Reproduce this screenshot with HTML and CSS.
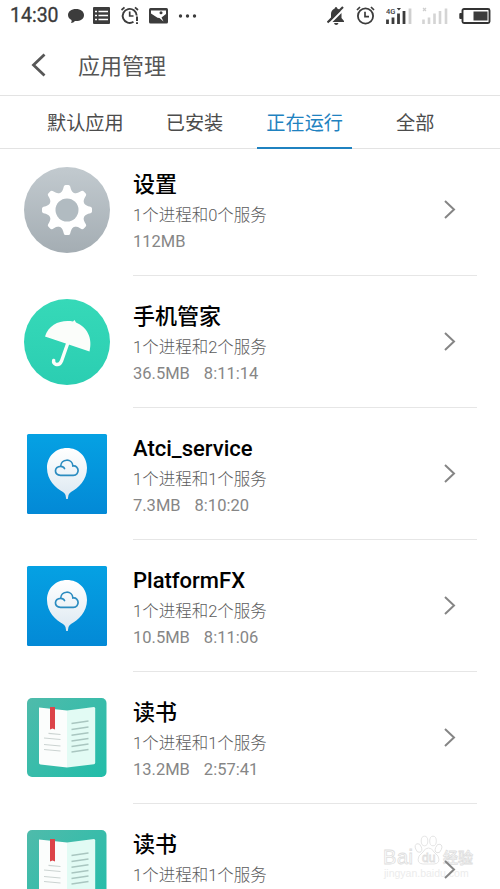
FILE: index.html
```html
<!DOCTYPE html>
<html lang="zh-CN">
<head>
    <meta charset="UTF-8">
    <meta name="viewport" content="width=device-width, initial-scale=1.0">
    <title>应用管理</title>
    <link rel="stylesheet" href="styles.css">
</head>
<body>

    <!-- shared shapes -->
    <svg class="defs" width="0" height="0">
        <defs>
            <linearGradient id="grey" x1="0" y1="0" x2="0" y2="1">
                <stop offset="0" stop-color="#c2cacf"/>
                <stop offset="1" stop-color="#a4adb3"/>
            </linearGradient>
            <linearGradient id="green" x1="0" y1="0" x2="0" y2="1">
                <stop offset="0" stop-color="#36d9b8"/>
                <stop offset="1" stop-color="#2bceb2"/>
            </linearGradient>
            <linearGradient id="blue" x1="0" y1="0" x2="0" y2="1">
                <stop offset="0" stop-color="#05a1e3"/>
                <stop offset="1" stop-color="#0389d6"/>
            </linearGradient>
            <linearGradient id="balloon" x1="0" y1="0" x2="0" y2="1">
                <stop offset="0" stop-color="#ffffff"/>
                <stop offset="1" stop-color="#dce8f1"/>
            </linearGradient>
            <linearGradient id="teal" x1="0" y1="0" x2="1" y2="1">
                <stop offset="0" stop-color="#4fbbab"/>
                <stop offset="1" stop-color="#22bda9"/>
            </linearGradient>
        </defs>
        <symbol id="chevron" viewBox="0 0 14 22">
            <path d="M2 2 L11 10.500 L2 19" fill="none" stroke="#858585" stroke-width="2"/>
        </symbol>
        <symbol id="cloud" viewBox="0 0 86 86">
            <rect x="3" y="3" width="80" height="80" rx="1.500" fill="url(#blue)"/>
            <path d="M43 17 C54.500 17 63 25.500 63 37 C63 49 54.500 57 47 61 Q45 62.500 44.500 64 L43.800 68 H42.200 L41.500 64 Q41 62.500 39 61 C31.500 57 23 49 23 37 C23 25.500 31.500 17 43 17Z" fill="url(#balloon)"/>
            <path d="M36.500 44.300 C29.500 44.300 30 35.300 36.700 35.300 C36.700 27.500 48.500 27 48.900 35 C55.500 34 56 44.300 49.300 44.300Z M36.700 35.300 Q39.500 35.300 40.500 37.500" fill="none" stroke="#2b8cc0" stroke-width="1.700" stroke-linecap="round"/>
        </symbol>
        <symbol id="book" viewBox="0 0 86 86">
            <rect x="3" y="3" width="79.500" height="79" rx="5" fill="url(#teal)"/>
            <path d="M15 12.500 L43 15.500 V72.500 L16.500 69.500 Q15 69.300 15 68Z" fill="#fbfdfc"/>
            <path d="M43 15.500 L70 12 Q71.200 12 71.200 13.500 V67.500 Q71.200 69 70 69.200 L43 72.500Z" fill="#e2fbf4"/>
            <path d="M26 12 H31 V34.500 L28.500 33.500 L26 34.500Z" fill="#dc4348"/>
            <path d="M24.500 38.300 L36.500 39.500 M20 43 L36.500 44.500 M20 49.500 L36.500 51 M20 54.500 L36.500 56" stroke="#cbd3d1" stroke-width="1.200"/>
            <path d="M47.500 28.500 L64.500 26 M47.500 34.500 L64.500 32 M47.500 40.200 L64.500 37.700 M47.500 46 L64.500 43.500 M47.500 51.500 L64.500 49 M47.500 57 L64.500 54.500" stroke="#a9c6c0" stroke-width="1.400"/>
        </symbol>
    </svg>

    <div class="status-bar">
        <span class="time">14:30</span>
        <svg class="ic-chat" width="18" height="18" viewBox="0 0 18 18">
            <path d="M9 2 C13.700 2 17 4.600 17 8 C17 12 13.500 14 9 14 L8 14 Q6.500 16 4 16 Q5 14.500 4.500 13 C2.300 12 1 10.200 1 8 C1 4.600 4.300 2 9 2Z" fill="#3c3c3c"/>
        </svg>
        <svg class="ic-list" width="17" height="17" viewBox="0 0 17 17">
            <rect width="17" height="17" rx="1" fill="#3c3c3c"/>
            <path d="M2 4.500 H4 M5.500 4.500 H15 M2 8.500 H4 M5.500 8.500 H15 M2 12.500 H4 M5.500 12.500 H15" stroke="#fff" stroke-width="1.300"/>
        </svg>
        <svg class="ic-alarm" width="20" height="19" viewBox="0 0 20 19">
            <path d="M13.500 15.800 A7 7 0 1 1 16.700 9.500" fill="none" stroke="#3c3c3c" stroke-width="1.900"/>
            <path d="M9.700 5.500 V10 H13.500 M1.500 4 L4.500 1.300 M15 1.300 L18 4" fill="none" stroke="#3c3c3c" stroke-width="1.700"/>
            <path d="M17 10.500 V15 M17 16.300 V18" stroke="#3c3c3c" stroke-width="2"/>
        </svg>
        <svg class="ic-photo" width="19" height="16" viewBox="0 0 19 16">
            <rect width="19" height="15.500" rx="1.500" fill="#3c3c3c"/>
            <path d="M2 2.500 H17 V6 L12.500 9.500 L14.500 13.500 L10.500 10 L8.500 9.800 L2 5.500Z" fill="#fff"/>
            <circle cx="12" cy="4.800" r="1.500" fill="#3c3c3c"/>
        </svg>
        <svg class="ic-more" width="19" height="6" viewBox="0 0 19 6">
            <g fill="#3c3c3c"><circle cx="2.500" cy="3" r="1.700"/><circle cx="9.500" cy="3" r="1.700"/><circle cx="16.500" cy="3" r="1.700"/></g>
        </svg>

        <svg class="ic-mute" width="18" height="19" viewBox="0 0 18 19">
            <path d="M9 1 Q10.300 1 10.300 2.500 Q14.500 4 14.500 8 V12 L17 15 V16 H1.500 V15 L4 12 V8 Q4 4 7.700 2.500 Q7.700 1 9 1Z M7 17 H11.500 Q11 19 9.200 19 Q7.500 19 7 17Z" fill="#3c3c3c"/>
            <path d="M2 18 L18 2" stroke="#fff" stroke-width="2"/>
            <path d="M0.500 16.500 L16 1" stroke="#3c3c3c" stroke-width="2.200"/>
        </svg>
        <svg class="ic-clock" width="19" height="19" viewBox="0 0 19 19">
            <circle cx="9.500" cy="10" r="7.600" fill="none" stroke="#3c3c3c" stroke-width="1.800"/>
            <path d="M9 5.800 V10.700 H13 M1 4 L4 1 M15 1 L18 4" fill="none" stroke="#3c3c3c" stroke-width="1.700"/>
        </svg>
        <svg class="ic-signal" width="26" height="18" viewBox="0 0 26 18">
            <text class="net" x="0" y="6.500">4G</text>
            <path d="M10.700 1 H15 L12.900 3.500Z" fill="#3c3c3c"/>
            <path d="M1.500 12.500 V17 M7 10.500 V17 M12.500 6.500 V17 M18 4 V17" stroke="#3c3c3c" stroke-width="2.800"/>
            <path d="M24 1.500 V17" stroke="#cfcfcf" stroke-width="2.800"/>
        </svg>
        <svg class="ic-signal2" width="26" height="18" viewBox="0 0 26 18">
            <path d="M1.500 12.500 V17 M7 10.500 V17 M12.500 6.500 V17 M18 4 V17 M24 1.500 V17" stroke="#d4d4d4" stroke-width="2.600"/>
            <path d="M1 1 L4 4 M4 1 L1 4" stroke="#cfcfcf" stroke-width="1.200"/>
        </svg>
        <svg class="ic-battery" width="32" height="16" viewBox="0 0 32 16">
            <rect x="3.500" y="1" width="27" height="14" rx="1.500" fill="#fff" stroke="#333" stroke-width="1.900"/>
            <rect x="0.300" y="5" width="3" height="6" rx="1" fill="#333"/>
            <rect x="14.500" y="3.500" width="14" height="9" fill="#3c3c3c"/>
        </svg>
    </div>

    <header class="title-bar">
        <svg class="back" width="16" height="24" viewBox="0 0 16 24">
            <path d="M13.500 1.500 L2.500 12 L13.500 22.500" fill="none" stroke="#575757" stroke-width="2.800"/>
        </svg>
        <h1>应用管理</h1>
    </header>

    <nav class="tabs">
        <a class="tab">默认应用</a>
        <a class="tab">已安装</a>
        <a class="tab active">正在运行</a>
        <a class="tab">全部</a>
    </nav>

    <ul class="app-list">
        <li class="app">
            <svg class="app-icon" viewBox="0 0 86 86">
                <circle cx="43" cy="43" r="43" fill="url(#grey)"/>
                <g fill="#fff">
                    <circle cx="43" cy="43" r="18.500"/>
                    <g id="teeth">
                        <path id="tooth" d="M36 26.500 Q38.800 24.500 39.800 19.500 Q40.200 18 41.500 18 H44.500 Q45.800 18 46.200 19.500 Q47.200 24.500 50 26.500Z"/>
                        <use href="#tooth" transform="rotate(45 43 43)"/>
                        <use href="#tooth" transform="rotate(90 43 43)"/>
                        <use href="#tooth" transform="rotate(135 43 43)"/>
                    </g>
                    <use href="#teeth" transform="rotate(180 43 43)"/>
                </g>
                <circle cx="43" cy="43" r="11.500" fill="#b1bbc1"/>
            </svg>
            <div class="info">
                <h2>设置</h2>
                <p>1个进程和0个服务</p>
                <p class="usage"><span>112MB</span></p>
            </div>
            <svg class="arrow"><use href="#chevron"/></svg>
        </li>
        <li class="app">
            <svg class="app-icon" viewBox="0 0 86 86">
                <circle cx="43" cy="43" r="43" fill="url(#green)"/>
                <path d="M21 37.500 C25 25 37 20.500 49 22.500 L50.500 21 L52 23.500 C63 28 69 39 65.500 52.500Z" fill="#fbfdfa"/>
                <path d="M43.500 45 L37.500 62 Q35.500 66.500 31.800 65.300 Q29 64.200 29.700 61.500" fill="none" stroke="#fbfdfa" stroke-width="3.400" stroke-linecap="round"/>
            </svg>
            <div class="info">
                <h2>手机管家</h2>
                <p>1个进程和2个服务</p>
                <p class="usage"><span>36.5MB</span><span>8:11:14</span></p>
            </div>
            <svg class="arrow"><use href="#chevron"/></svg>
        </li>
        <li class="app">
            <svg class="app-icon"><use href="#cloud"/></svg>
            <div class="info">
                <h2>Atci_service</h2>
                <p>1个进程和1个服务</p>
                <p class="usage"><span>7.3MB</span><span>8:10:20</span></p>
            </div>
            <svg class="arrow"><use href="#chevron"/></svg>
        </li>
        <li class="app">
            <svg class="app-icon"><use href="#cloud"/></svg>
            <div class="info">
                <h2>PlatformFX</h2>
                <p>1个进程和2个服务</p>
                <p class="usage"><span>10.5MB</span><span>8:11:06</span></p>
            </div>
            <svg class="arrow"><use href="#chevron"/></svg>
        </li>
        <li class="app">
            <svg class="app-icon"><use href="#book"/></svg>
            <div class="info">
                <h2>读书</h2>
                <p>1个进程和1个服务</p>
                <p class="usage"><span>13.2MB</span><span>2:57:41</span></p>
            </div>
            <svg class="arrow"><use href="#chevron"/></svg>
        </li>
        <li class="app">
            <svg class="app-icon"><use href="#book"/></svg>
            <div class="info">
                <h2>读书</h2>
                <p>1个进程和1个服务</p>
            </div>
            <svg class="arrow"><use href="#chevron"/></svg>
        </li>
    </ul>

    <svg class="watermark" width="94" height="48" viewBox="0 0 94 48">
        <g fill="#fff" stroke="#dedede" stroke-width="0.800">
            <text class="wm-latin" x="0" y="30" textLength="30">Bai</text>
            <ellipse cx="35.500" cy="14" rx="3" ry="4.500" transform="rotate(-20 35.500 14)"/>
            <ellipse cx="41.500" cy="7" rx="3.300" ry="4.800"/>
            <ellipse cx="50" cy="7" rx="3.300" ry="4.800"/>
            <ellipse cx="55.500" cy="14.500" rx="3" ry="4.500" transform="rotate(20 55.500 14.500)"/>
            <path d="M45.500 14 Q49 14 51 18 L55 22 Q58 29.500 51 30 H40 Q33 29.500 36 22 L40 18 Q42 14 45.500 14Z"/>
            <text class="wm-du" x="39" y="28">du</text>
            <text class="wm-cjk" x="60" y="29">经验</text>
        </g>
        <text class="wm-url" x="1" y="43">jingyan.baidu.com</text>
    </svg>

</body>
</html>
```
FILE: styles.css
```css
* {
    box-sizing: border-box;
}

body {
    margin: 0;
    height: 889px;
    overflow: hidden;
    position: relative;
    background: #fff;
    color: #555;
    font-family: Roboto, 'Noto Sans CJK SC', sans-serif;
}

svg {
    display: block;
    flex-shrink: 0;
}

.defs {
    position: absolute;
}

/* status bar */
.status-bar {
    display: flex;
    align-items: center;
    height: 31px;
    padding: 0 9px 0 10px;
}

.time {
    width: 50px;
    font-size: 19.5px;
    color: #3a3a3a;
    -webkit-text-stroke: 0.3px #3a3a3a;
}

.ic-chat { margin-left: 7px; }
.ic-list { margin-left: 8px; }
.ic-alarm { margin-left: 10px; }
.ic-photo { margin-left: 9px; }
.ic-more { margin-left: 10px; }
.ic-mute { margin-left: auto; }
.ic-clock { margin-left: 11px; }
.ic-signal { margin-left: 11px; }
.ic-signal2 { margin-left: 10px; }
.ic-battery { margin-left: 11px; }

.net {
    font-size: 7.5px;
    font-weight: 500;
    fill: #3c3c3c;
}

/* title bar */
.title-bar {
    display: flex;
    align-items: center;
    height: 65px;
    padding: 4px 0 0 31px;
    border-bottom: 1px solid #e3e3e3;
}

h1 {
    margin: 3px 0 0 31px;
    font-size: 22px;
    font-weight: 400;
    line-height: 30px;
    color: #555;
}

/* tabs */
.tabs {
    display: flex;
    height: 53px;
    padding-left: 38px;
    border-bottom: 1px solid #e3e3e3;
}

.tab {
    height: 53px;
    margin-right: 24px;
    padding: 0 9px;
    font-size: 19.2px;
    line-height: 56px;
    color: #4c4c4c;
}

.active {
    margin: 0 35px 0 1px;
    color: #1f82c0;
    border-bottom: 2px solid #1f82c0;
}

/* running apps */
.app-list {
    height: 745px;
    margin: -5px 0 0;
    padding: 0;
    overflow: hidden;
    list-style: none;
}

.app {
    display: flex;
    height: 132px;
    padding-left: 24px;
}

.app-icon {
    width: 86px;
    height: 86px;
    margin-top: 23px;
}

.info {
    width: 344px;
    margin-left: 23px;
    padding-top: 26px;
    border-bottom: 1px solid #e6e6e6;
}

h2 {
    margin: 0;
    font-size: 22px;
    font-weight: 500;
    line-height: 30px;
    color: #000;
}

p {
    margin: 2px 0 0;
    font-size: 16.5px;
    font-weight: 300;
    line-height: 28px;
    color: #5c5c5c;
}

.usage {
    display: flex;
    gap: 14px;
    margin-top: 0;
    line-height: 24px;
    font-weight: 400;
    color: #868686;
}

.arrow {
    width: 14px;
    height: 22px;
    margin: 55px 0 0 -34px;
}

.watermark {
    position: absolute;
    left: 383px;
    top: 834px;
    z-index: -1;
}

.wm-latin {
    font: 400 20px 'Liberation Sans', sans-serif;
}

.wm-du {
    font: 400 12px 'Liberation Sans', sans-serif;
}

.wm-cjk {
    font-size: 15px;
    font-weight: 500;
}

.wm-url {
    font: 10.5px 'Liberation Sans', sans-serif;
    fill: #ececec;
}
```
